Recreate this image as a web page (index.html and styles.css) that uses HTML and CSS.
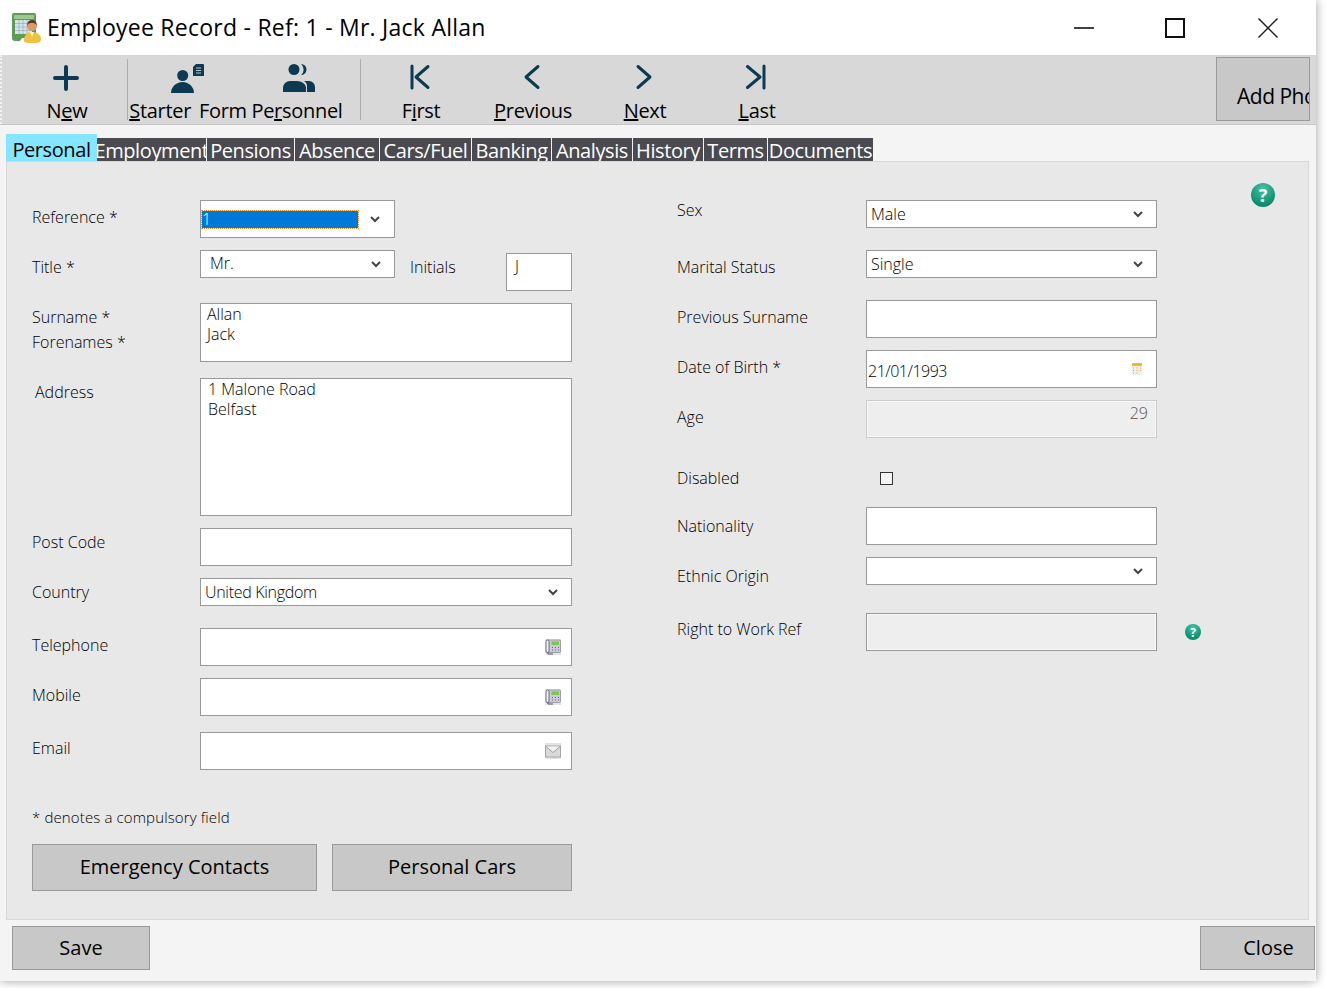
FILE: index.html
```html
<!DOCTYPE html>
<html>
<head>
  <title>Employee Record</title>
  <link rel="stylesheet" href="styles.css">
</head>
<body>
  <svg class="defs" width="0" height="0">
    <symbol id="chev" viewBox="0 0 10 7"><path d="M1 1l4 4 4-4" fill="none" stroke="#444" stroke-width="2"/></symbol>
    <symbol id="phone" viewBox="0 0 16 16">
      <rect width="16" height="16" fill="#e4e4e4"/>
      <rect x="1.500" y="1" width="14" height="12.500" rx="1" fill="#c9c9e0" stroke="#77778a" stroke-width=".6"/>
      <rect x="6.500" y="2.500" width="7.500" height="3.500" fill="#7cc84a"/>
      <path d="M7 8.500h1M10 8.500h1M13 8.500h1M7 11h1M10 11h1M13 11h1" stroke="#66667c"/>
      <rect x="1" y="1" width="3" height="12.500" rx="1.400" fill="#f2f4f6" stroke="#4d4d5c" stroke-width=".8"/>
      <path d="M3 13.500v1.500h5" fill="none" stroke="#55556a"/>
    </symbol>
  </svg>

  <div class="window">
    <div class="titlebar">
      <svg class="appicon" width="31" height="31" viewBox="0 0 31 31">
        <path d="M1 3a2 2 0 0 1 2-2h20a2 2 0 0 1 2 2v20l-3 3H11l-2 3H4a3 3 0 0 1-3-3z" fill="#5f9a58"/>
        <rect x="3" y="3" width="20" height="4" fill="#9cc98e"/>
        <rect x="4" y="8" width="17" height="14" fill="#d7e4ea"/>
        <path d="M4 11.500h17M4 15h17M4 18.500h17M8 8v14M12 8v14M16 8v14" stroke="#9fb2bd" stroke-width=".8"/>
        <path d="M13 29c0-6 3-9 8-9s9 3 9 7-4 4-8 4-9 0-9-2z" fill="#eec33f"/>
        <path d="M19 20l2 5 2-5z" fill="#fff3c8"/>
        <circle cx="21" cy="14" r="5" fill="#d99a6c"/>
        <path d="M16 14c0-4 2-6 5-6s5 2 5 6c-1-3-3-3-5-3s-4 0-5 3z" fill="#63391d"/>
      </svg>
      <span class="wintitle">Employee Record - Ref: 1 - Mr. Jack Allan</span>
      <div class="winctl">
        <svg width="20" height="20" viewBox="0 0 20 20"><path d="M0 10h20" stroke="#111" stroke-width="1.600"/></svg>
        <svg width="20" height="20" viewBox="0 0 20 20"><rect x="1" y="1" width="18" height="18" fill="none" stroke="#111" stroke-width="2"/></svg>
        <svg class="x" width="20" height="20" viewBox="0 0 20 20"><path d="M.5.5l19 19M19.500.5l-19 19" stroke="#222" stroke-width="1.500"/></svg>
      </div>
    </div>

    <div class="toolbar">
      <div class="grip"></div>
      <div class="tool w120">
        <svg width="28" height="28" viewBox="0 0 28 28"><path d="M13 3v22M2 14h22" class="ico"/></svg>
        <span>N<u>e</u>w</span>
      </div>
      <div class="sep"></div>
      <div class="tool w120">
        <svg width="34" height="30" viewBox="0 -1 34 30">
          <circle cx="11.700" cy="11.500" r="5.500" fill="#0d3a52"/>
          <path d="M0 29c0-6 5-11 11.500-11S23 23 23 29z" fill="#0d3a52"/>
          <path d="M25 0h7a1 1 0 0 1 1 1v11H22V3z" fill="#0d3a52"/>
          <path d="M25 4h5M25 6.500h5M25 9h5" stroke="#b9c6cd"/>
        </svg>
        <span class="wide-word"><u>S</u>tarter Form</span>
      </div>
      <div class="tool w98">
        <svg width="36" height="30" viewBox="0 -1 36 30">
          <circle cx="15" cy="5.500" r="5.500" fill="#0d3a52"/>
          <path d="M22 0a5.500 5.500 0 0 1 0 11 7 7 0 0 0 0-11z" fill="#0d3a52"/>
          <path d="M4 28v-5a7 7 0 0 1 7-6h7a9 7 0 0 1 9 6v5z" fill="#0d3a52"/>
          <path d="M28 28v-6c0-2-1-4-3-5h5a6 6 0 0 1 6 6v5z" fill="#0d3a52"/>
        </svg>
        <span>Pe<u>r</u>sonnel</span>
      </div>
      <div class="sep lastsep"></div>
      <div class="tool w112">
        <svg width="28" height="28" viewBox="0 0 28 28"><path d="M5 2v22M21 2.500L9 13l12 10.500" class="ico thin"/></svg>
        <span>F<u>i</u>rst</span>
      </div>
      <div class="tool w112">
        <svg width="28" height="28" viewBox="0 0 28 28"><path d="M19 2.500L7 13l12 10.500" class="ico thin"/></svg>
        <span><u>P</u>revious</span>
      </div>
      <div class="tool w112">
        <svg width="28" height="28" viewBox="0 0 28 28"><path d="M7 2.500L19 13 7 23.500" class="ico thin"/></svg>
        <span><u>N</u>ext</span>
      </div>
      <div class="tool w112">
        <svg width="28" height="28" viewBox="0 0 28 28"><path d="M4.500 2.500L17 13 4.500 23.500M21 2v22" class="ico thin"/></svg>
        <span><u>L</u>ast</span>
      </div>
      <div class="addphoto">Add Photo</div>
    </div>

    <div class="main">
      <div class="tabs">
        <div class="tab active">Personal</div>
        <div class="tab">Employment</div>
        <div class="tab">Pensions</div>
        <div class="tab">Absence</div>
        <div class="tab">Cars/Fuel</div>
        <div class="tab">Banking</div>
        <div class="tab">Analysis</div>
        <div class="tab">History</div>
        <div class="tab">Terms</div>
        <div class="tab">Documents</div>
      </div>

      <div class="panel">
        <div class="help big">?</div>
        <div class="col">
          <div class="row">
            <label class="lbl down">Reference *</label>
            <div class="field combo ref">
              <span class="selected">1</span>
              <svg class="chev" width="10" height="7"><use href="#chev"/></svg>
            </div>
          </div>
          <div class="row title-row">
            <label class="lbl down">Title *</label>
            <div class="field combo short"><span class="mr">Mr.</span><svg class="chev" width="10" height="7"><use href="#chev"/></svg></div>
            <label class="lbl initials">Initials</label>
            <div class="field box initbox"><span class="j">J</span></div>
          </div>
          <div class="row">
            <div class="lbl two">Surname *<br>Forenames *</div>
            <div class="field wide names">Allan<br>Jack</div>
          </div>
          <div class="row gap16">
            <label class="lbl indent">Address</label>
            <div class="field wide addr">1 Malone Road<br>Belfast</div>
          </div>
          <div class="row">
            <label class="lbl">Post Code</label>
            <div class="field wide box"></div>
          </div>
          <div class="row">
            <label class="lbl">Country</label>
            <div class="field wide combo country">United Kingdom<svg class="chev" width="10" height="7"><use href="#chev"/></svg></div>
          </div>
          <div class="row gap22">
            <label class="lbl down">Telephone</label>
            <div class="field wide box iconbox"><svg width="16" height="16"><use href="#phone"/></svg></div>
          </div>
          <div class="row">
            <label class="lbl down">Mobile</label>
            <div class="field wide box iconbox"><svg width="16" height="16"><use href="#phone"/></svg></div>
          </div>
          <div class="row gap16">
            <label class="lbl mid">Email</label>
            <div class="field wide box iconbox">
              <svg width="16" height="16" viewBox="0 0 16 16">
                <rect width="16" height="16" fill="#e4e4e4"/>
                <rect x=".5" y="3" width="15" height="11" fill="#d9d9d9" stroke="#a5a5a5"/>
                <path d="M1 3.500l7 6 7-6" fill="#f3f3f3" stroke="#9c9c9c"/>
              </svg>
            </div>
          </div>
          <div class="note">* denotes a compulsory field</div>
          <div class="actions">
            <div class="btn emergency">Emergency Contacts</div>
            <div class="btn cars">Personal Cars</div>
          </div>
        </div>

        <div class="col right">
          <div class="row">
            <label class="lbl high">Sex</label>
            <div class="field rf combo rtext">Male<svg class="chev" width="10" height="7"><use href="#chev"/></svg></div>
          </div>
          <div class="row gap22">
            <label class="lbl down">Marital Status</label>
            <div class="field rf combo rtext">Single<svg class="chev" width="10" height="7"><use href="#chev"/></svg></div>
          </div>
          <div class="row gap22">
            <label class="lbl down">Previous Surname</label>
            <div class="field rf box"></div>
          </div>
          <div class="row">
            <label class="lbl down">Date of Birth *</label>
            <div class="field rf box dob">
              <span>21/01/1993</span>
              <svg width="10" height="12" viewBox="0 0 10 12">
                <rect width="10" height="12" fill="#eef0f2"/>
                <rect width="10" height="3" fill="#f9b52c"/>
                <path d="M1 5h1M4.500 5h1M8 5h1M1 7.500h1M4.500 7.500h1M8 7.500h1M1 10h1M4.500 10h1" stroke="#f59a23"/>
              </svg>
            </div>
          </div>
          <div class="row">
            <label class="lbl down">Age</label>
            <div class="field rf off age">29</div>
          </div>
          <div class="row check-row">
            <label class="lbl">Disabled</label>
            <div class="check"></div>
          </div>
          <div class="row">
            <label class="lbl lower">Nationality</label>
            <div class="field rf box"></div>
          </div>
          <div class="row">
            <label class="lbl lower">Ethnic Origin</label>
            <div class="field rf combo"><svg class="chev" width="10" height="7"><use href="#chev"/></svg></div>
          </div>
          <div class="row gap26">
            <label class="lbl mid">Right to Work Ref</label>
            <div class="field rf off rightwork"></div>
            <div class="help small">?</div>
          </div>
        </div>
      </div>

      <div class="footer">
        <div class="btn save">Save</div>
        <div class="btn close">Close</div>
      </div>
    </div>
  </div>
</body>
</html>
```
FILE: styles.css
```css
* {
  box-sizing: border-box;
}
body {
  margin: 0;
  height: 988px;
  overflow: hidden;
  background: #fff;
  font-family: "Open Sans", "Noto Sans", sans-serif;
  color: #000;
}
.defs {
  position: absolute;
}
.window {
  width: 1316px;
  height: 981px;
  display: flex;
  flex-direction: column;
  background: #fff;
  box-shadow: 0 0 10px rgba(0, 0, 0, 0.38);
}

/* title bar */
.titlebar {
  height: 55px;
  flex: none;
  display: flex;
  align-items: center;
  padding-left: 11px;
}
.appicon {
  margin-right: 5px;
}
.wintitle {
  margin-top: -2px;
  font-size: 23px;
  letter-spacing: 0.25px;
  white-space: nowrap;
}
.winctl {
  margin-left: auto;
  padding-right: 38px;
  display: flex;
  align-items: center;
}
.winctl svg {
  margin-left: 71px;
}
.winctl .x {
  margin-left: 73px;
}

/* toolbar */
.toolbar {
  height: 70px;
  flex: none;
  display: flex;
  background: #d8d8d8;
  border-bottom: 1px solid #c6c6c6;
}
.grip {
  width: 7px;
  border-left: 2px dotted #f2f2f2;
}
.tool {
  display: flex;
  flex-direction: column;
  align-items: center;
  padding-top: 8px;
  font-size: 20px;
  white-space: nowrap;
}
.tool svg {
  height: 30px;
  flex: none;
}
.tool span {
  margin-top: 3px;
  line-height: 30px;
  letter-spacing: -0.3px;
}
.wide-word {
  word-spacing: 3px;
}
.w120 {
  width: 120px;
}
.w98 {
  width: 98px;
}
.w112 {
  width: 112px;
}
.sep {
  width: 1px;
  height: 61px;
  margin-top: 4px;
  background: #adadad;
}
.lastsep {
  margin-left: 14px;
  margin-right: 4px;
}
.ico {
  fill: none;
  stroke: #0d3a52;
  stroke-width: 4;
  stroke-linecap: round;
  stroke-linejoin: round;
}
.ico.thin {
  stroke-width: 3;
}
.addphoto {
  width: 94px;
  height: 64px;
  margin: 2px 6px 0 auto;
  padding: 24px 0 0 20px;
  background: #c8c8c8;
  border: 1px solid #999;
  font-size: 21px;
  line-height: 28px;
  letter-spacing: -0.5px;
  white-space: nowrap;
  overflow: hidden;
}

/* tabs */
.main {
  flex: 1;
  display: flex;
  flex-direction: column;
  background: #f4f4f4;
}
.tabs {
  display: grid;
  grid-template-columns: 90px 109px 87px 84px 91px 79px 80px 70px 63px 105px;
  column-gap: 1px;
  align-items: end;
  margin: 9px 0 0 6px;
}
.tab {
  height: 23px;
  display: flex;
  justify-content: center;
  background: #4a4a50;
  color: #fff;
  font-size: 20px;
  line-height: 25px;
  letter-spacing: -0.4px;
  white-space: nowrap;
}
.tab.active {
  position: relative;
  z-index: 1;
  height: 27px;
  margin-right: -1px;
  background: #86e5ff;
  color: #000;
  line-height: 32px;
}

/* form panel */
.panel {
  position: relative;
  width: 1303px;
  height: 759px;
  margin-left: 6px;
  padding: 38px 0 0 25px;
  display: flex;
  background: #e8e8e8;
  border: 1px solid #d8d8d8;
}
.col {
  width: 645px;
  flex: none;
}
.row {
  display: flex;
  align-items: flex-start;
  margin-top: 12px;
}
.row:first-child {
  margin-top: 0;
}
.gap16 {
  margin-top: 16px;
}
.gap22 {
  margin-top: 22px;
}
.gap26 {
  margin-top: 26px;
}
.lbl {
  width: 168px;
  flex: none;
  padding-top: 3px;
  font-size: 16px;
  font-weight: 300;
  line-height: 22px;
  white-space: nowrap;
}
.lbl.down {
  padding-top: 6px;
}
.lbl.mid {
  padding-top: 5px;
}
.lbl.lower {
  padding-top: 8px;
}
.lbl.high {
  padding-top: 0;
  margin-top: -1px;
}
.lbl.indent {
  padding-left: 3px;
}
.lbl.two {
  line-height: 25px;
  padding-top: 2px;
}
.field {
  height: 38px;
  flex: none;
  background: #fff;
  border: 1px solid #999;
  font-size: 16px;
  font-weight: 300;
  line-height: 20px;
}
.wide {
  width: 372px;
}
.combo {
  height: 28px;
  display: flex;
  align-items: center;
  justify-content: space-between;
  padding-right: 13px;
}
.chev {
  margin-left: auto;
  flex: none;
}
.ref {
  width: 195px;
  height: 38px;
  padding-left: 1px;
  padding-right: 14px;
}
.selected {
  width: 156px;
  height: 17px;
  background: #0078d7;
  color: #fff;
  line-height: 16px;
  outline: 1px dotted #d98b2b;
}
.short {
  width: 195px;
  padding-left: 9px;
}
.mr {
  margin-top: -2px;
}
.title-row {
  height: 41px;
}
.lbl.initials {
  width: 111px;
  padding: 6px 0 0 15px;
}
.initbox {
  width: 66px;
  margin-top: 3px;
  padding: 2px 0 0 8px;
}
.names {
  height: 59px;
  padding: 0 0 0 6px;
}
.addr {
  height: 138px;
  padding: 0 0 0 7px;
}
.country {
  padding-left: 4px;
  padding-right: 13px;
  letter-spacing: -0.3px;
}
.iconbox {
  display: flex;
  align-items: center;
  justify-content: flex-end;
  padding-right: 10px;
}
.note {
  margin-top: 37px;
  font-size: 15px;
  font-weight: 300;
  line-height: 20px;
  letter-spacing: 0.13px;
}
.actions {
  display: flex;
  gap: 15px;
  margin-top: 17px;
}
.btn {
  height: 47px;
  display: flex;
  align-items: center;
  justify-content: center;
  padding-bottom: 2px;
  background: #c8c8c8;
  border: 1px solid #999;
  font-size: 20px;
}
.emergency {
  width: 285px;
}
.cars {
  width: 240px;
}

/* right column */
.right {
  width: 600px;
}
.right .lbl {
  width: 189px;
}
.rf {
  width: 291px;
}
.rtext {
  padding-left: 4px;
}
.dob {
  display: flex;
  align-items: center;
  justify-content: space-between;
  padding: 4px 14px 0 1px;
  letter-spacing: -0.5px;
}
.dob svg {
  margin-top: -5px;
}
.off {
  background: #eee;
  box-shadow: inset 0 0 0 1px #f8f8f8;
}
.age {
  padding: 2px 8px 0 0;
  text-align: right;
  border-color: #ccc;
  color: #555;
}
.check-row {
  height: 35px;
  margin-top: 22px;
}
.right .check-row .lbl {
  padding-top: 7px;
}
.check {
  width: 13px;
  height: 13px;
  margin: 12px 0 0 14px;
  background: #f4f4f4;
  border: 1px solid #333;
}
.rightwork {
  margin-right: 28px;
}
.help {
  display: flex;
  align-items: center;
  justify-content: center;
  border-radius: 50%;
  background: radial-gradient(circle at 50% 25%, #45c5a5, #0b8a6c 75%);
  color: #fff;
  font-weight: 700;
}
.help.big {
  position: absolute;
  top: 21px;
  left: 1244px;
  width: 24px;
  height: 24px;
  font-size: 18px;
}
.help.small {
  width: 16px;
  height: 16px;
  margin-top: 11px;
  font-size: 12px;
}

/* footer */
.footer {
  flex: 1;
  display: flex;
  justify-content: space-between;
  align-items: flex-start;
  padding: 6px 1px 0 12px;
}
.save {
  width: 138px;
  height: 44px;
}
.close {
  width: 115px;
  height: 44px;
  padding-left: 22px;
}
```
